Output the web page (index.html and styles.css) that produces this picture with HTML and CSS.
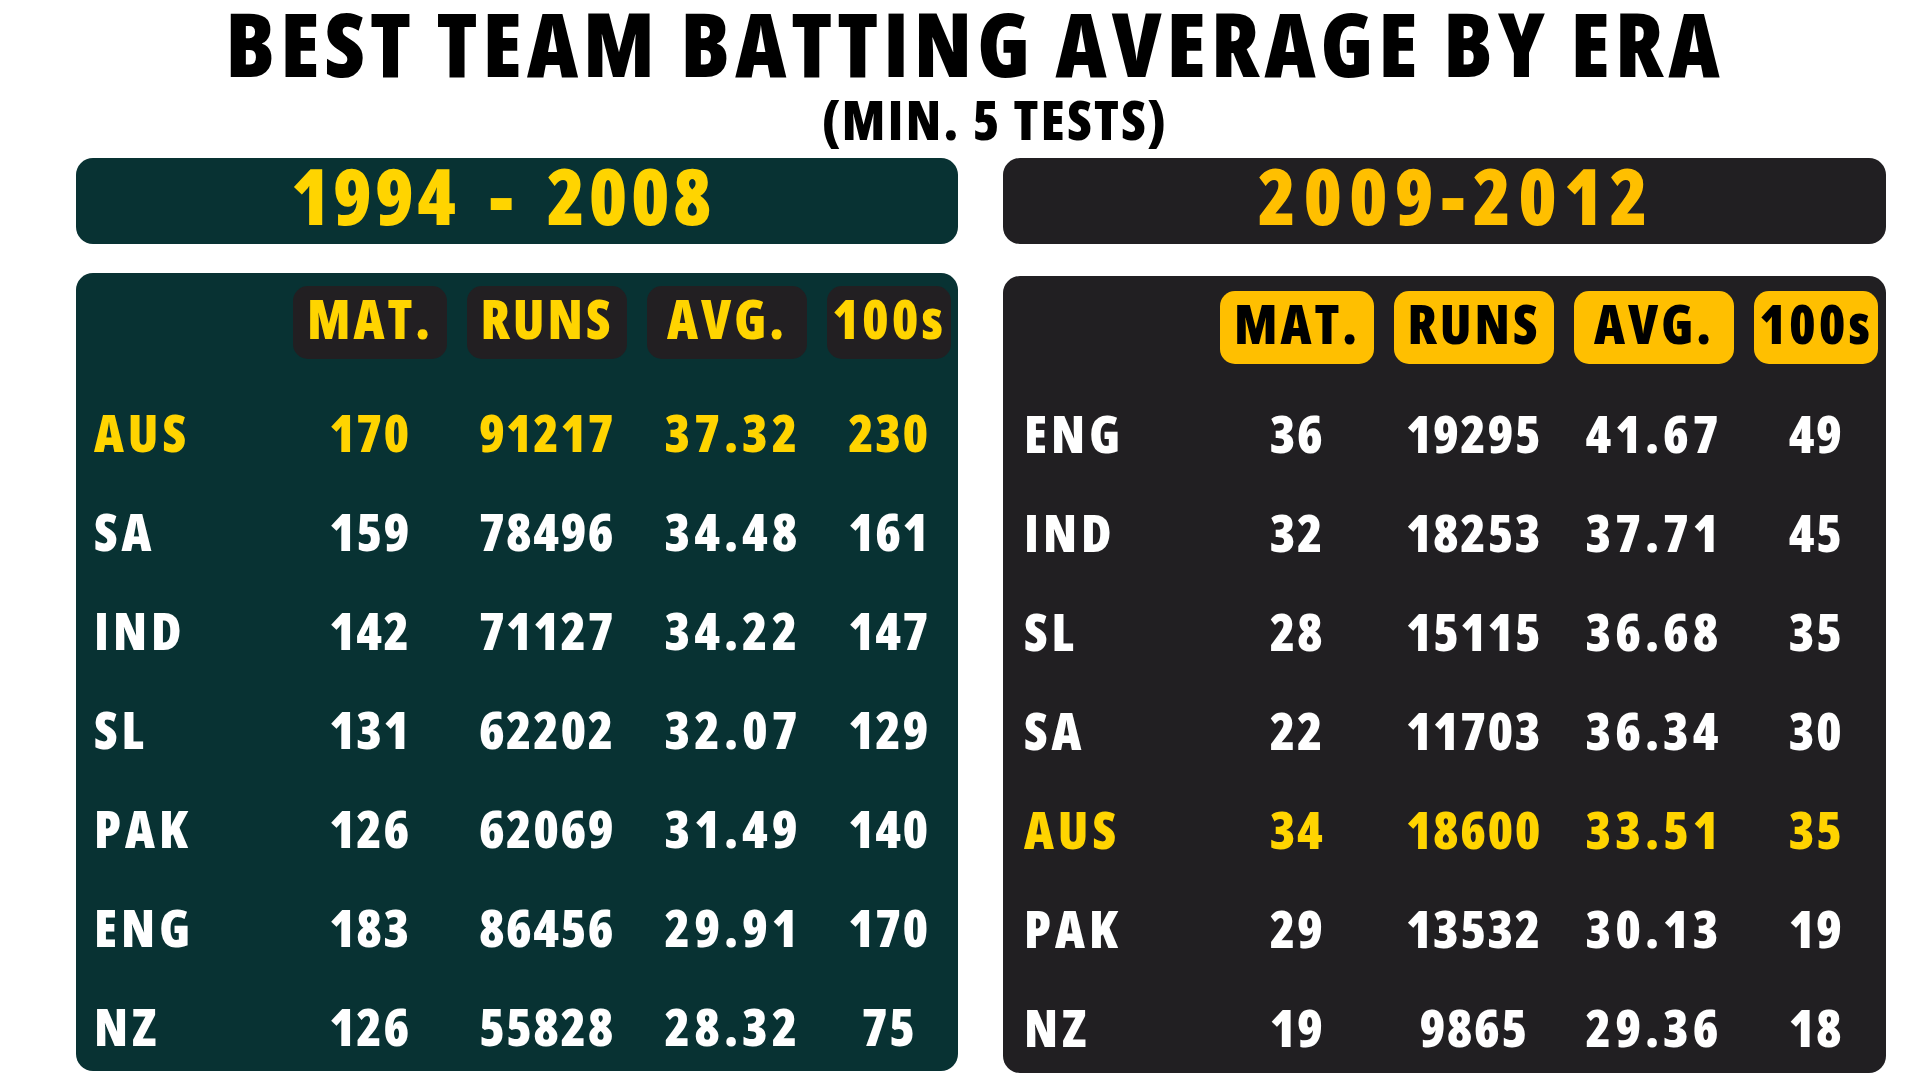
FILE: index.html
```html
<!DOCTYPE html>
<html lang="en">
<head>
<meta charset="utf-8">
<title>Best Team Batting Average by Era</title>
<link rel="stylesheet" href="styles.css">
</head>
<body>
<main class="page">
  <h1 class="title">BEST TEAM BATTING AVERAGE BY ERA</h1>
  <p class="subtitle">(MIN. 5 TESTS)</p>
  <div class="panels">
    <section class="panel panel--teal">
      <div class="era era--left"><span>1994 - 2008</span></div>
      <div class="table">
        <div class="corner"></div>
        <div class="pill">MAT.</div>
        <div class="pill">RUNS</div>
        <div class="pill">AVG.</div>
        <div class="pill">100s</div>

        <div class="team hl">AUS</div><div class="num hl">170</div><div class="num hl">91217</div><div class="num hl">37.32</div><div class="num hl">230</div>
        <div class="team">SA</div><div class="num">159</div><div class="num">78496</div><div class="num">34.48</div><div class="num">161</div>
        <div class="team">IND</div><div class="num">142</div><div class="num">71127</div><div class="num">34.22</div><div class="num">147</div>
        <div class="team">SL</div><div class="num">131</div><div class="num">62202</div><div class="num">32.07</div><div class="num">129</div>
        <div class="team">PAK</div><div class="num">126</div><div class="num">62069</div><div class="num">31.49</div><div class="num">140</div>
        <div class="team">ENG</div><div class="num">183</div><div class="num">86456</div><div class="num">29.91</div><div class="num">170</div>
        <div class="team">NZ</div><div class="num">126</div><div class="num">55828</div><div class="num">28.32</div><div class="num">75</div>
      </div>
    </section>
    <section class="panel panel--dark">
      <div class="era era--right"><span>2009-2012</span></div>
      <div class="table">
        <div class="corner"></div>
        <div class="pill">MAT.</div>
        <div class="pill">RUNS</div>
        <div class="pill">AVG.</div>
        <div class="pill">100s</div>

        <div class="team">ENG</div><div class="num">36</div><div class="num">19295</div><div class="num">41.67</div><div class="num">49</div>
        <div class="team">IND</div><div class="num">32</div><div class="num">18253</div><div class="num">37.71</div><div class="num">45</div>
        <div class="team">SL</div><div class="num">28</div><div class="num">15115</div><div class="num">36.68</div><div class="num">35</div>
        <div class="team">SA</div><div class="num">22</div><div class="num">11703</div><div class="num">36.34</div><div class="num">30</div>
        <div class="team hl">AUS</div><div class="num hl">34</div><div class="num hl">18600</div><div class="num hl">33.51</div><div class="num hl">35</div>
        <div class="team">PAK</div><div class="num">29</div><div class="num">13532</div><div class="num">30.13</div><div class="num">19</div>
        <div class="team">NZ</div><div class="num">19</div><div class="num">9865</div><div class="num">29.36</div><div class="num">18</div>
      </div>
    </section>
  </div>
</main>
</body>
</html>
```

FILE: styles.css
```css
html, body {
  margin: 0;
  padding: 0;
  background: #ffffff;
}

body {
  width: 1920px;
  height: 1080px;
  overflow: hidden;
  font-family: "Open Sans", "Liberation Sans", sans-serif;
  font-weight: 800;
  font-stretch: 75%;
  color: #000;
}

.page {
  box-sizing: border-box;
  width: 1920px;
  height: 1080px;
  padding: 3px 34px 0 76px;
}

.title {
  margin: 0;
  padding-right: 12px;
  font-size: 89px;
  line-height: 80px;
  font-weight: 800;
  letter-spacing: 5px;
  text-align: center;
  white-space: nowrap;
  color: #000;
}

.subtitle {
  margin: 9px 0 0;
  padding-left: 28px;
  font-size: 54px;
  line-height: 54px;
  letter-spacing: 2.4px;
  text-align: center;
  white-space: nowrap;
  color: #000;
}

.panels {
  margin-top: 12px;
  display: grid;
  grid-template-columns: 882px 883px;
  column-gap: 45px;
}

.panel {
  display: flex;
  flex-direction: column;
}

.era {
  height: 86px;
  box-sizing: border-box;
  border-radius: 17px;
  padding-bottom: 11px;
  font-size: 78px;
  line-height: 75px;
  text-align: center;
  white-space: pre;
}

.era--left {
  padding-right: 28px;
  letter-spacing: 3.5px;
  word-spacing: 12px;
}

.era--right {
  padding-left: 24px;
  letter-spacing: 7px;
}

.table {
  margin-top: 29px;
  box-sizing: border-box;
  border-radius: 17px;
  padding: 13px 8px 3px 0;
  display: grid;
  grid-template-columns: 197px 154px 160px 160px 124px;
  grid-template-rows: 89px repeat(7, 84px);
  column-gap: 20px;
  row-gap: 15px;
}

.panel--dark .table {
  margin-top: 32px;
  padding-top: 15px;
  padding-bottom: 4px;
  grid-template-rows: 85px repeat(7, 84px);
}

.pill {
  align-self: start;
  height: 73px;
  box-sizing: border-box;
  padding-bottom: 9px;
  border-radius: 15px;
  font-size: 54px;
  line-height: 64px;
  letter-spacing: 3px;
  text-align: center;
  white-space: nowrap;
}

.team,
.num {
  font-size: 52px;
  line-height: 84px;
  color: #ffffff;
  white-space: nowrap;
}

.team {
  padding-left: 18px;
  letter-spacing: 4px;
}

.panel--dark .team {
  padding-left: 21px;
}

.num {
  text-align: center;
  letter-spacing: 1.5px;
}

.num:nth-child(5n+4) {
  letter-spacing: 4px;
}

.panel--teal .num:nth-child(5n+4) {
  padding-left: 12px;
}

.team.hl,
.num.hl {
  color: #ffd400;
}

/* Teal era (1994 - 2008) */
.panel--teal .era,
.panel--teal .table {
  background: #083233;
}

.panel--teal .era {
  color: #ffd400;
}

.panel--teal .pill {
  background: #221f22;
  color: #ffd400;
}

/* Dark era (2009-2012) */
.panel--dark .era,
.panel--dark .table {
  background: #211f22;
}

.panel--dark .era {
  color: #ffbf00;
}

.panel--dark .pill {
  background: #ffbf00;
  color: #000000;
}
```
